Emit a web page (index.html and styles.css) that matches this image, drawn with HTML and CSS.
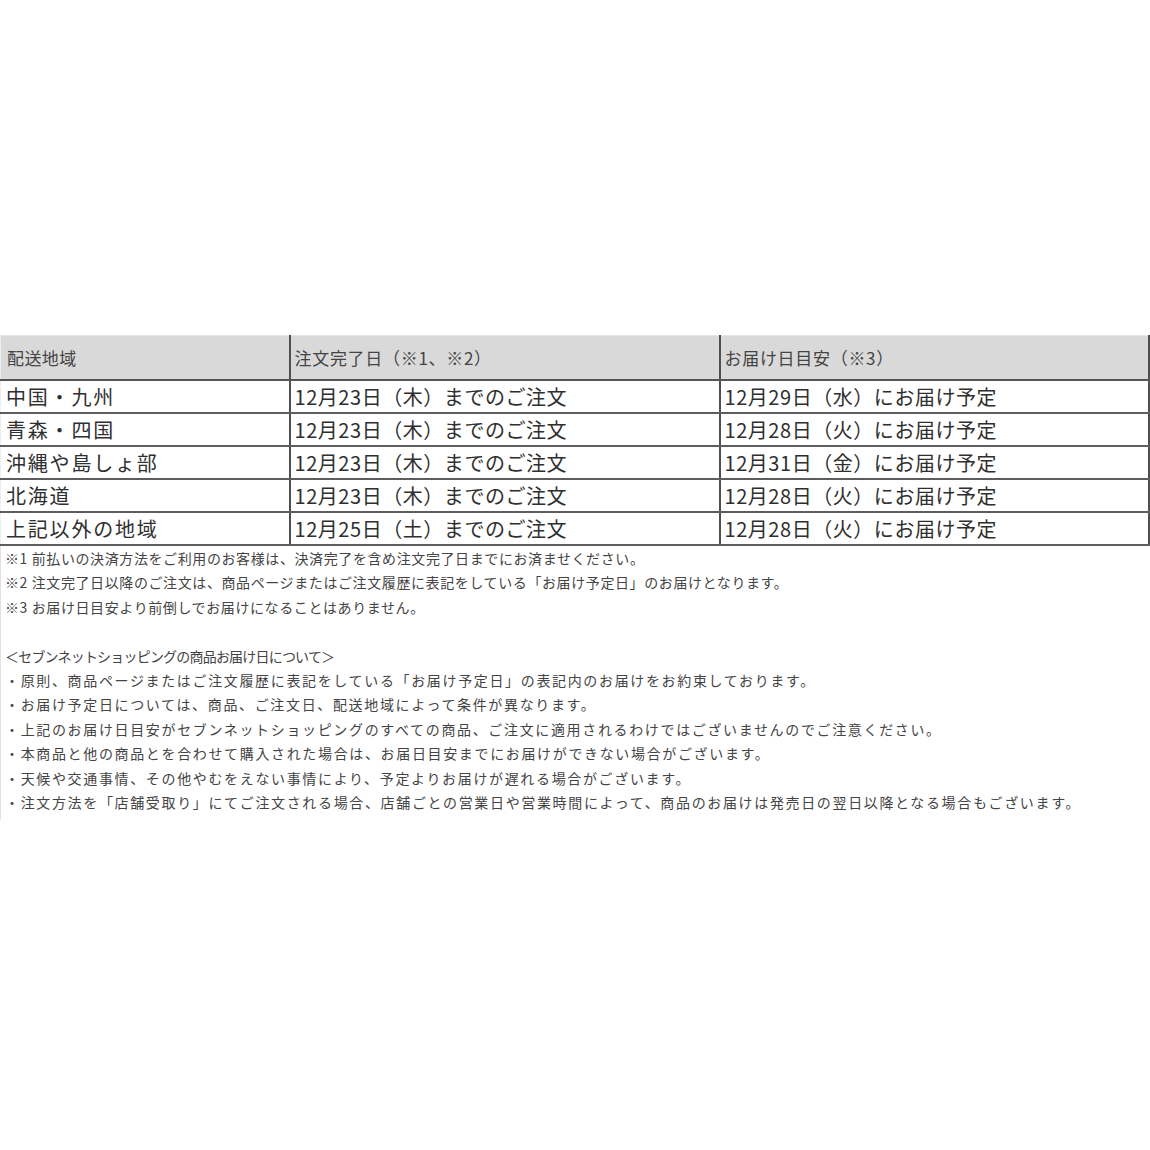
FILE: index.html
```html
<!DOCTYPE html>
<html lang="ja">
<head>
<meta charset="utf-8">
<link rel="stylesheet" href="styles.css">
</head>
<body>
<div class="page">
  <div class="sheet">
    <table class="ship">
      <colgroup>
        <col class="c1"><col class="c2"><col class="c3">
      </colgroup>
      <thead>
        <tr><th>配送地域</th><th>注文完了日（※1、※2）</th><th>お届け日目安（※3）</th></tr>
      </thead>
      <tbody>
        <tr><td>中国・九州</td><td>12月23日（木）までのご注文</td><td>12月29日（水）にお届け予定</td></tr>
        <tr><td>青森・四国</td><td>12月23日（木）までのご注文</td><td>12月28日（火）にお届け予定</td></tr>
        <tr><td>沖縄や島しょ部</td><td>12月23日（木）までのご注文</td><td>12月31日（金）にお届け予定</td></tr>
        <tr><td>北海道</td><td>12月23日（木）までのご注文</td><td>12月28日（火）にお届け予定</td></tr>
        <tr><td>上記以外の地域</td><td>12月25日（土）までのご注文</td><td>12月28日（火）にお届け予定</td></tr>
      </tbody>
    </table>
    <div class="notes">
      <p>※1 前払いの決済方法をご利用のお客様は、決済完了を含め注文完了日までにお済ませください。</p>
      <p>※2 注文完了日以降のご注文は、商品ページまたはご注文履歴に表記をしている「お届け予定日」のお届けとなります。</p>
      <p>※3 お届け日目安より前倒しでお届けになることはありません。</p>
    </div>
    <div class="about">
      <p class="ttl">＜セブンネットショッピングの商品お届け日について＞</p>
      <p>・原則、商品ページまたはご注文履歴に表記をしている「お届け予定日」の表記内のお届けをお約束しております。</p>
      <p>・お届け予定日については、商品、ご注文日、配送地域によって条件が異なります。</p>
      <p>・上記のお届け日目安がセブンネットショッピングのすべての商品、ご注文に適用されるわけではございませんのでご注意ください。</p>
      <p>・本商品と他の商品とを合わせて購入された場合は、お届日目安までにお届けができない場合がございます。</p>
      <p>・天候や交通事情、その他やむをえない事情により、予定よりお届けが遅れる場合がございます。</p>
      <p>・注文方法を「店舗受取り」にてご注文される場合、店舗ごとの営業日や営業時間によって、商品のお届けは発売日の翌日以降となる場合もございます。</p>
    </div>
  </div>
</div>
</body>
</html>
```
FILE: styles.css
```css
html, body {
  margin: 0;
  padding: 0;
  background: #ffffff;
}
body {
  font-family: "Noto Sans CJK JP", "Noto Sans", sans-serif;
  color: #333333;
}
.page {
  width: 1150px;
  height: 1150px;
  padding-top: 335px;
  box-sizing: border-box;
}
.sheet {
  width: 1148px;
  border-left: 1px solid #e2e2e2;
  padding-bottom: 6px;
}
.ship {
  width: 1148px;
  border-collapse: collapse;
  table-layout: fixed;
  margin-left: -1px;
}
.c1 { width: 289px; }
.c2 { width: 430px; }
.c3 { width: 429px; }
.ship th {
  background: #d9d9d9;
  height: 43px;
  font-size: 17px;
  font-weight: normal;
  letter-spacing: 0.7px;
  color: #444444;
  text-align: left;
  padding: 0 0 0 4px;
  border-top: 1px solid #e6e6e6;
  border-bottom: 2px solid #555555;
  border-right: 2px solid #4f4f4f;
}
.ship th:first-child { padding-left: 6px; letter-spacing: 0.4px; }
.ship td {
  height: 31px;
  font-size: 20px;
  line-height: 24px;
  letter-spacing: 0.55px;
  color: #2f2f2f;
  padding: 0 0 0 4px;
  border-bottom: 2px solid #5d5d5d;
  border-right: 2px solid #4f4f4f;
  white-space: nowrap;
}
.ship td:first-child {
  padding-left: 5px;
  letter-spacing: 1.8px;
}
.ship tr > :first-child { border-left: 1px solid #eeeeee; }
.notes, .about {
  padding-left: 4px;
  font-size: 14px;
  line-height: 24.4px;
  color: #444444;
}
.notes p, .about p {
  margin: 0;
  white-space: nowrap;
}
.notes { letter-spacing: 0.6px; }
.about {
  margin-top: 24.4px;
  letter-spacing: 1.65px;
}
.about .ttl { letter-spacing: -0.8px; }
```
